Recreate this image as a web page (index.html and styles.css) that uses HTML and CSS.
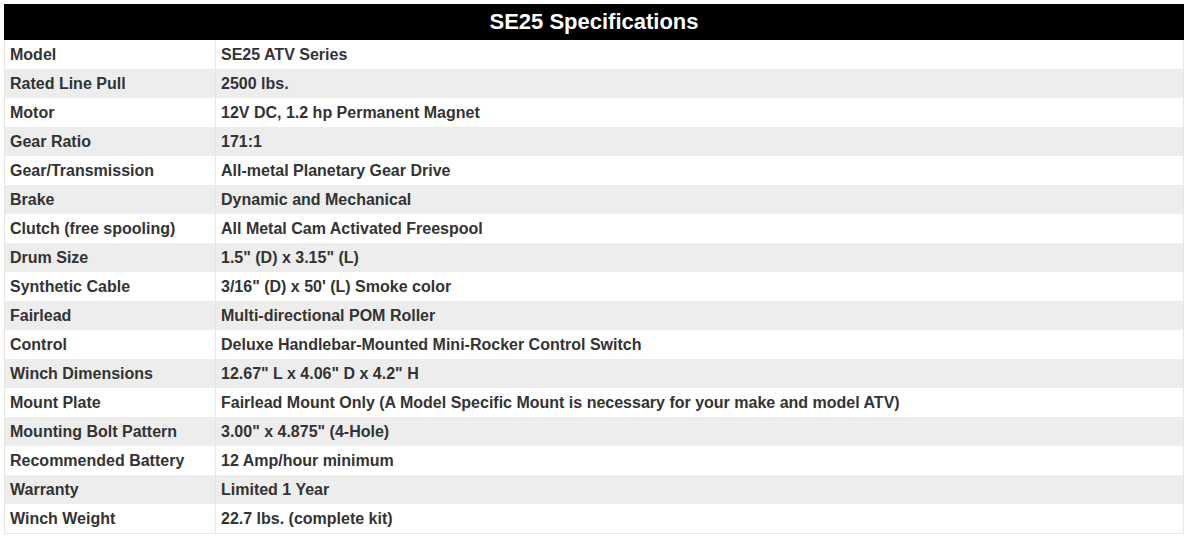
FILE: index.html
```html
<!DOCTYPE html>
<html>
<head>
<meta charset="utf-8">
<link rel="stylesheet" href="styles.css">
</head>
<body>
<table class="specs">
  <thead>
    <tr><th colspan="2" class="title">SE25 Specifications</th></tr>
  </thead>
  <tbody>
    <tr><td class="label">Model</td><td>SE25 ATV Series</td></tr>
    <tr><td class="label">Rated Line Pull</td><td>2500 lbs.</td></tr>
    <tr><td class="label">Motor</td><td>12V DC, 1.2 hp Permanent Magnet</td></tr>
    <tr><td class="label">Gear Ratio</td><td>171:1</td></tr>
    <tr><td class="label">Gear/Transmission</td><td>All-metal Planetary Gear Drive</td></tr>
    <tr><td class="label">Brake</td><td>Dynamic and Mechanical</td></tr>
    <tr><td class="label">Clutch (free spooling)</td><td>All Metal Cam Activated Freespool</td></tr>
    <tr><td class="label">Drum Size</td><td>1.5" (D) x 3.15" (L)</td></tr>
    <tr><td class="label">Synthetic Cable</td><td>3/16" (D) x 50' (L) Smoke color</td></tr>
    <tr><td class="label">Fairlead</td><td>Multi-directional POM Roller</td></tr>
    <tr><td class="label">Control</td><td>Deluxe Handlebar-Mounted Mini-Rocker Control Switch</td></tr>
    <tr><td class="label">Winch Dimensions</td><td>12.67" L x 4.06" D x 4.2" H</td></tr>
    <tr><td class="label">Mount Plate</td><td>Fairlead Mount Only (A Model Specific Mount is necessary for your make and model ATV)</td></tr>
    <tr><td class="label">Mounting Bolt Pattern</td><td>3.00" x 4.875" (4-Hole)</td></tr>
    <tr><td class="label">Recommended Battery</td><td>12 Amp/hour minimum</td></tr>
    <tr><td class="label">Warranty</td><td>Limited 1 Year</td></tr>
    <tr><td class="label">Winch Weight</td><td>22.7 lbs. (complete kit)</td></tr>
  </tbody>
</table>
</body>
</html>
```
FILE: styles.css
```css
html, body {
  margin: 0;
  padding: 0;
  background: #fff;
}
body {
  padding: 4px;
  font-family: "Liberation Sans", Arial, sans-serif;
}
.specs {
  width: 100%;
  border-collapse: collapse;
  border: 1px solid #e6e6e6;
}
.specs .title {
  background: #000;
  color: #fff;
  font-size: 22px;
  font-weight: bold;
  height: 34px;
  padding: 0;
  text-align: center;
  vertical-align: middle;
  border: 1px solid #000;
}
.specs td {
  height: 29px;
  padding: 0 5px;
  font-size: 16px;
  font-weight: bold;
  color: #333;
  border: 1px solid #e6e6e6;
  border-top: 0;
  border-bottom: 0;
  vertical-align: middle;
  text-align: left;
}
.specs td.label {
  width: 200px;
}
.specs tbody tr:nth-child(even) td {
  background: #ededed;
}
```
